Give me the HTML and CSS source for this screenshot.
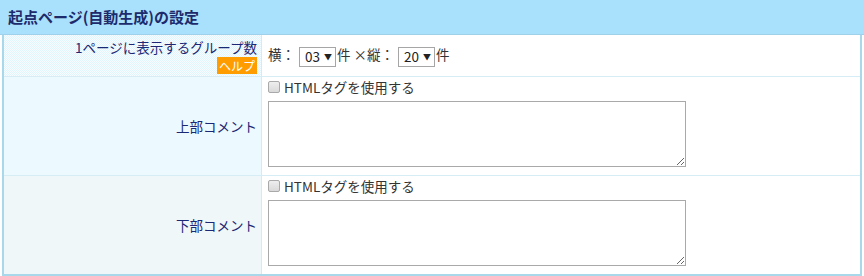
FILE: index.html
```html
<!DOCTYPE html>
<html lang="ja">

<head>
    <meta charset="UTF-8">
    <meta name="viewport" content="width=device-width, initial-scale=1.0">
    <title>起点ページ(自動生成)の設定</title>
    <link rel="stylesheet" href="styles.css">
</head>

<body>
    <h2 class="panel-title">起点ページ(自動生成)の設定</h2>
    <table class="setting-table">
        <tr class="row-count">
            <th class="label top">
                <div>1ページに表示するグループ数</div>
                <span class="help">ヘルプ</span>
            </th>
            <td class="value">
                横：
                <span class="select-wrap">
                    <select name="cols">
                        <option>01</option>
                        <option>02</option>
                        <option selected>03</option>
                        <option>04</option>
                    </select>
                </span>件 ×縦：
                <span class="select-wrap">
                    <select name="rows">
                        <option>10</option>
                        <option selected>20</option>
                        <option>30</option>
                    </select>
                </span>件
            </td>
        </tr>
        <tr class="row-comment">
            <th class="label">上部コメント</th>
            <td class="value">
                <label class="check"><input type="checkbox" name="headHtml"> HTMLタグを使用する</label>
                <textarea name="headComment"></textarea>
            </td>
        </tr>
        <tr class="row-comment">
            <th class="label gray">下部コメント</th>
            <td class="value">
                <label class="check"><input type="checkbox" name="footHtml"> HTMLタグを使用する</label>
                <textarea name="footComment"></textarea>
            </td>
        </tr>
    </table>
</body>

</html>
```

FILE: styles.css
```css
body {
    margin: 0;
    font-family: "Noto Sans CJK JP", "Noto Sans", sans-serif;
    font-size: 13.5px;
    color: #333;
    background-color: #fff;
}

.panel-title {
    margin: 0;
    height: 34px;
    line-height: 34px;
    padding-left: 8px;
    font-size: 15px;
    font-weight: bold;
    color: #1d2a6b;
    background-color: #a9e0fb;
    border-bottom: 1px solid #9fd2ea;
}

.setting-table {
    width: 860px;
    margin: 0 2px;
    border-collapse: collapse;
    border: 2px solid #a8d8ea;
    border-top: none;
}

.setting-table th,
.setting-table td {
    padding: 0;
    border-bottom: 1px solid #d6edf6;
}

.label {
    width: 253px;
    padding-right: 4px !important;
    text-align: right;
    font-weight: normal;
    color: #1b2875;
    border-right: 1px solid #d2ecf6;
    background: repeating-conic-gradient(#e1f5fd 0 25%, #f6fcff 0 50%) 0 0 / 2px 2px;
}

.label.top {
    vertical-align: top;
    padding-top: 4px !important;
    line-height: 17px;
}

.label.gray {
    background: repeating-conic-gradient(#e8f2f5 0 25%, #f8fbfc 0 50%) 0 0 / 2px 2px;
}

.help {
    display: inline-block;
    margin-top: 1px;
    margin-bottom: 2px;
    padding: 0 2px;
    line-height: 17px;
    font-size: 12px;
    color: #fff;
    background-color: #ff9c00;
}

.value {
    padding-left: 6px !important;
    vertical-align: top;
}

.row-count .value {
    vertical-align: middle;
}

.select-wrap {
    position: relative;
    display: inline-block;
    vertical-align: middle;
    margin: 0 1px;
}

.select-wrap select {
    appearance: none;
    -webkit-appearance: none;
    display: block;
    width: 37px;
    height: 20px;
    padding: 0 0 2px 5px;
    line-height: 16px;
    font-family: inherit;
    font-size: 13.5px;
    color: #222;
    background-color: #fff;
    border: 1px solid #a6a6a6;
    border-radius: 0;
}

.select-wrap::after {
    content: "▼";
    position: absolute;
    right: 4px;
    top: 5px;
    font-size: 8px;
    line-height: 10px;
    color: #222;
    pointer-events: none;
}

.check {
    display: flex;
    align-items: center;
    gap: 4px;
    height: 16px;
    margin-top: 2px;
}

.check input {
    appearance: none;
    -webkit-appearance: none;
    width: 12px;
    height: 12px;
    margin: 0;
    border: 1px solid #a9a9a9;
    border-radius: 2px;
    background: linear-gradient(#eeeeee, #d9d9d9);
}

.value textarea {
    display: block;
    box-sizing: border-box;
    width: 418px;
    height: 66px;
    margin: 6px 0 8px 0;
    border: 1px solid #a9a9a9;
    font-family: inherit;
}
```
